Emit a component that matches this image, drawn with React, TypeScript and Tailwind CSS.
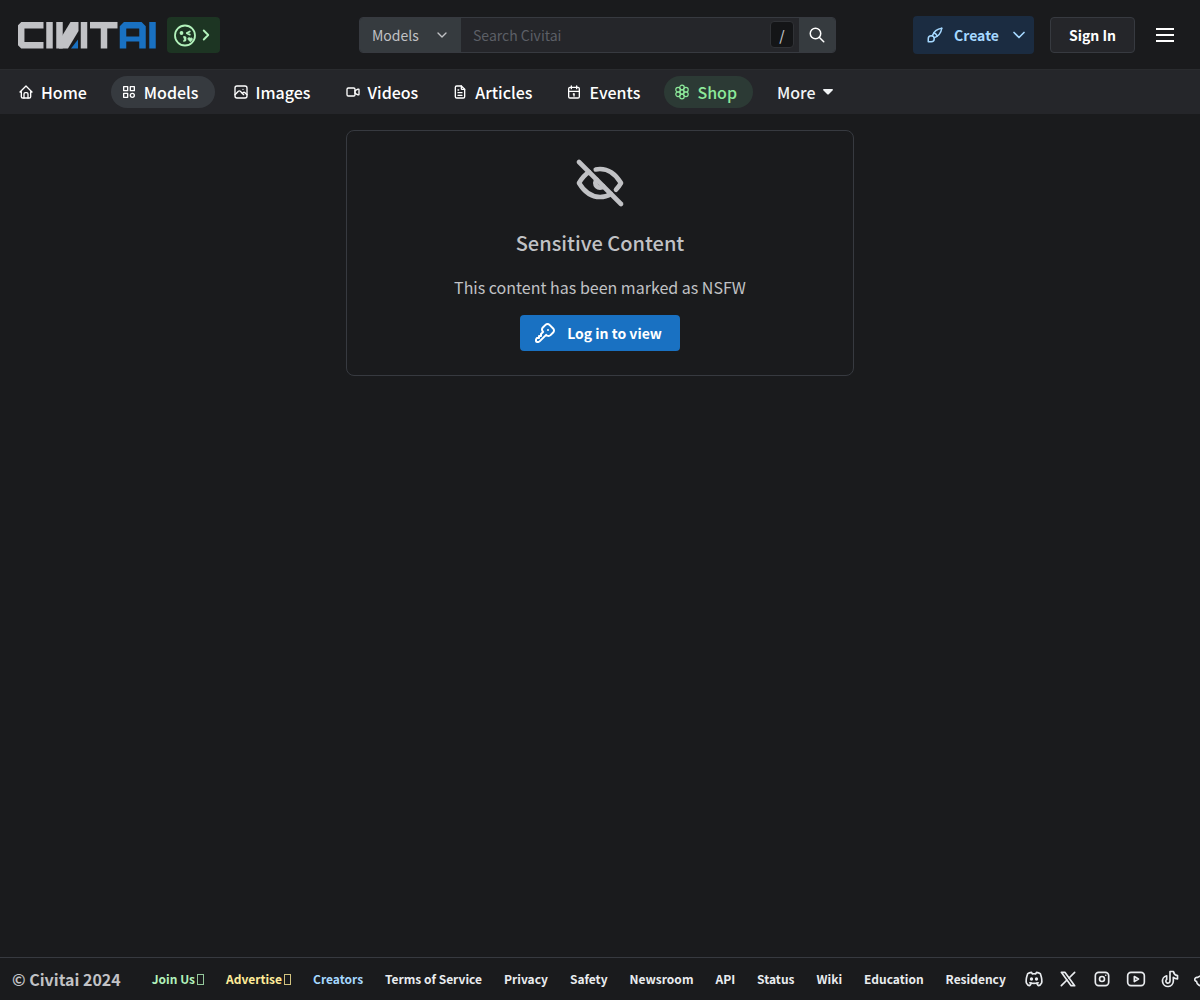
import type { ReactNode } from 'react'
import {
  TbBrandDiscord,
  TbBrandInstagram,
  TbBrandReddit,
  TbBrandTiktok,
  TbBrandX,
  TbBrandYoutube,
  TbBrush,
  TbCalendar,
  TbCategory,
  TbChevronDown,
  TbChevronRight,
  TbEyeOff,
  TbFileText,
  TbHome,
  TbKey,
  TbPhoto,
  TbSearch,
  TbVideo,
} from 'react-icons/tb'

function Logo() {
  return (
    <svg width="138" height="29" viewBox="0 -2 138 29" fill="none" role="img" aria-label="Civitai">
      <g stroke="#c1c2c5" strokeWidth="6.5">
        <polyline points="25.5,3.2 4.6,3.2 3.2,4.6 3.2,21.9 4.6,23.3 25.5,23.3" />
        <line x1="31.5" y1="0" x2="31.5" y2="26.5" />
        <line x1="41.5" y1="0" x2="41.5" y2="26.5" />
        <line x1="66" y1="0" x2="66" y2="26.5" />
        <line x1="72" y1="3.2" x2="99.5" y2="3.2" />
        <line x1="86" y1="3" x2="86" y2="26.5" />
      </g>
      <polygon points="52.5,0 60.5,0 60.5,9 50,26.5 41,26.5 41,19" fill="#c1c2c5" />
      <polygon points="53,26.5 60,17.5 60,26.5" fill="#1971c2" />
      <g stroke="#1971c2" strokeWidth="6.5">
        <polyline points="105,26.5 105,5.5 107.3,3.2 122.2,3.2 124.5,5.5 124.5,26.5" />
        <line x1="105" y1="17" x2="124" y2="17" strokeWidth="5" />
        <line x1="134.5" y1="0" x2="134.5" y2="26.5" />
      </g>
    </svg>
  )
}

function KissFace() {
  return (
    <svg width="24" height="24" viewBox="0 0 24 24" fill="none" stroke="#b2f2bb" strokeWidth="1.8" strokeLinecap="round" strokeLinejoin="round">
      <circle cx="12" cy="12.5" r="10" />
      <circle cx="8.5" cy="10" r="1" fill="#b2f2bb" />
      <path d="M16.800 8.500l-3 1.600l3 1.500" />
      <path d="M11 14c2 0 2 1.700 .5 1.900c1.500 .2 1.500 2-.5 2" />
      <path d="M17.200 18.600l-1.900-2c-1.100-1.500 .8-2.700 1.900-1.300c1.400-1.200 2.900 .4 1.800 1.700z" fill="#b2f2bb" strokeWidth="1" />
    </svg>
  )
}

function FlowerIcon() {
  return (
    <svg width="16" height="16" viewBox="0 0 24 24" fill="none" stroke="currentColor" strokeWidth="1.8">
      <circle cx="12" cy="12" r="3" />
      <circle cx="12" cy="5.2" r="3.4" />
      <circle cx="12" cy="18.8" r="3.4" />
      <circle cx="6.1" cy="8.6" r="3.4" />
      <circle cx="17.9" cy="8.6" r="3.4" />
      <circle cx="6.1" cy="15.4" r="3.4" />
      <circle cx="17.9" cy="15.4" r="3.4" />
    </svg>
  )
}

const NAV: { label: string; icon: ReactNode; className: string }[] = [
  { label: 'Home', icon: <TbHome size={16} />, className: 'text-white' },
  { label: 'Models', icon: <TbCategory size={16} />, className: 'text-white bg-[#363a3f]' },
  { label: 'Images', icon: <TbPhoto size={16} />, className: 'text-white' },
  { label: 'Videos', icon: <TbVideo size={16} />, className: 'text-white' },
  { label: 'Articles', icon: <TbFileText size={16} />, className: 'text-white' },
  { label: 'Events', icon: <TbCalendar size={16} />, className: 'text-white' },
  { label: 'Shop', icon: <FlowerIcon />, className: 'text-[#8ce99a] bg-[#2c3a35]' },
]

const LINKS = [
  { label: 'Join Us', className: 'text-[#b2f2bb]', box: true },
  { label: 'Advertise', className: 'text-[#ffec99]', box: true },
  { label: 'Creators', className: 'text-[#a5d8ff]' },
  { label: 'Terms of Service', className: 'text-[#e9ecef]' },
  { label: 'Privacy', className: 'text-[#e9ecef]' },
  { label: 'Safety', className: 'text-[#e9ecef]' },
  { label: 'Newsroom', className: 'text-[#e9ecef]' },
  { label: 'API', className: 'text-[#e9ecef]' },
  { label: 'Status', className: 'text-[#e9ecef]' },
  { label: 'Wiki', className: 'text-[#e9ecef]' },
  { label: 'Education', className: 'text-[#e9ecef]' },
  { label: 'Residency', className: 'text-[#e9ecef]' },
]

const SOCIALS = [
  { label: 'Discord', Icon: TbBrandDiscord },
  { label: 'X', Icon: TbBrandX },
  { label: 'Instagram', Icon: TbBrandInstagram },
  { label: 'YouTube', Icon: TbBrandYoutube },
  { label: 'TikTok', Icon: TbBrandTiktok },
  { label: 'Reddit', Icon: TbBrandReddit },
]

function Header() {
  return (
    <header className="grid grid-cols-[1fr_minmax(0,477px)_1fr] items-center h-[70px] pl-[18px] pr-[23px] border-b border-[#2a2c2f]">
      <div className="flex items-center gap-[11px]">
        <a href="#home"><Logo /></a>
        <button aria-label="Browsing mode" className="flex items-center h-9 w-[53px] pl-1.5 rounded bg-[#1d3523] text-[#b2f2bb]">
          <KissFace />
          <TbChevronRight size={18} strokeWidth={2.5} />
        </button>
      </div>

      <form className="flex h-9 rounded border border-[#373a40] bg-[#25262a] overflow-hidden" onSubmit={(e) => e.preventDefault()}>
        <div className="grid w-[101px] shrink-0 items-center bg-[#363b3f]">
          <select aria-label="Search in" className="col-start-1 row-start-1 appearance-none h-full w-full pl-3 text-sm text-[#c1c2c5] bg-transparent outline-none">
            <option>Models</option>
          </select>
          <TbChevronDown size={16} className="col-start-1 row-start-1 justify-self-end mr-[11px] text-[#c1c2c5] pointer-events-none" />
        </div>
        <input type="text" aria-label="Search Civitai" placeholder="Search Civitai" className="flex-1 min-w-0 px-3 text-sm text-white placeholder:text-[#5c5f66] bg-transparent outline-none" />
        <kbd className="flex items-center justify-center self-center w-6 h-[27px] mr-[5px] rounded border border-[#303236] bg-[#141517] font-['Noto_Sans_CJK_SC',sans-serif] text-sm font-medium text-[#c1c2c5]">/</kbd>
        <button aria-label="Search" className="flex items-center justify-center w-9 bg-[#363b3f] text-white">
          <TbSearch size={18} />
        </button>
      </form>

      <div className="flex items-center justify-end">
        <button className="flex items-center h-[38px] pl-[13px] pr-[5px] mr-4 rounded bg-[#1b2c41] text-[#a5d8ff] text-sm font-bold">
          <TbBrush size={18} className="mr-2.5" />
          Create
          <TbChevronDown size={20} className="ml-2.5" />
        </button>
        <button className="h-9 px-[18px] mr-[18px] rounded border border-[#373a40] bg-[#25262a] text-white text-sm font-bold">
          Sign In
        </button>
        <button aria-label="Menu" className="flex flex-col items-center justify-center gap-1 w-6 h-6">
          <span className="w-[18px] h-0.5 bg-white" />
          <span className="w-[18px] h-0.5 bg-white" />
          <span className="w-[18px] h-0.5 bg-white" />
        </button>
      </div>
    </header>
  )
}

function SubNav() {
  return (
    <nav className="flex items-center gap-2 h-11 px-2 bg-[#25262a] text-base font-medium">
      {NAV.map((item) => (
        <a
          key={item.label}
          href={`#${item.label.toLowerCase()}`}
          className={`flex items-center gap-[7px] h-8 pl-2.5 pr-4 rounded-full ${item.className}`}
        >
          {item.icon}
          {item.label}
        </a>
      ))}
      <button className="flex items-center gap-1.5 h-8 px-4 text-[#f1f3f5]">
        More
        <svg width="12" height="6" viewBox="0 0 12 6" fill="currentColor">
          <path d="M1.5 0h9l.5 1l-4.500 4.600h-1l-4.500-4.600z" />
        </svg>
      </button>
    </nav>
  )
}

function Footer() {
  return (
    <footer className="flex items-center h-[43px] pl-3 border-t border-[#373a40] overflow-hidden whitespace-nowrap">
      <span className="text-base font-bold text-[#c1c2c5] mr-[31px]">© Civitai 2024</span>
      <div className="flex items-center gap-[22px] shrink-0 text-xs font-bold">
        {LINKS.map((link) => (
          <a key={link.label} href="#footer" className={`flex items-center gap-0.5 ${link.className}`}>
            {link.label}
            {link.box && <span className="w-[7px] h-[11px] border border-current opacity-80" />}
          </a>
        ))}
      </div>
      <div className="flex items-center gap-3.5 ml-[18px] shrink-0 text-[#e9ecef]">
        {SOCIALS.map(({ label, Icon }) => (
          <a key={label} href="#social" aria-label={label}>
            <Icon size={20} />
          </a>
        ))}
      </div>
    </footer>
  )
}

export default function App() {
  return (
    <div className="flex flex-col min-h-screen bg-[#1a1b1d] text-[#c1c2c5] font-['Noto_Sans_CJK_SC',sans-serif]">
      <Header />
      <SubNav />
      <main className="flex-1 p-4">
        <section className="flex flex-col items-center max-w-[508px] mx-auto p-6 rounded-lg border border-[#373a40]">
          <TbEyeOff size={56} />
          <h1 className="mt-4 text-xl leading-8 font-medium">Sensitive Content</h1>
          <p className="mt-4 text-base leading-6">This content has been marked as NSFW</p>
          <button className="flex items-center gap-2.5 h-9 mt-4 pl-[13px] pr-[18px] rounded bg-[#1971c2] text-white text-sm font-bold">
            <TbKey size={24} />
            Log in to view
          </button>
        </section>
      </main>
      <Footer />
    </div>
  )
}
